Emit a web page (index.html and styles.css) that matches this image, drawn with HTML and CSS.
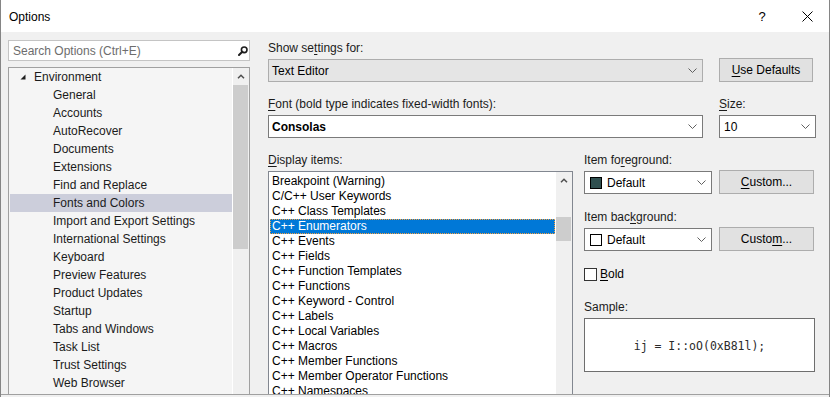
FILE: index.html
```html
<!DOCTYPE html>
<html lang="en">
<head>
    <meta charset="UTF-8">
    <meta name="viewport" content="width=device-width, initial-scale=1.0">
    <title>Options</title>
    <link rel="stylesheet" href="styles.css">
</head>
<body>

    <div class="window">
        <div class="titlebar">
            <span class="title">Options</span>
            <span class="caption-btn help">?</span>
            <span class="caption-btn close">
                <svg width="11" height="11" viewBox="0 0 11 11"><path d="M0.5 0.5 L10.5 10.5 M10.5 0.5 L0.5 10.5" stroke="#000" stroke-width="1" fill="none"/></svg>
            </span>
        </div>

        <div class="content">
            <!-- left: search + tree -->
            <div class="nav">
                <div class="search">
                    <span class="placeholder">Search Options (Ctrl+E)</span>
                    <svg class="search-icon" width="10" height="10" viewBox="0 0 10 10"><circle cx="6.2" cy="3.8" r="2.8" fill="none" stroke="#1e1e1e" stroke-width="1.6"/><path d="M4.3 5.7 L1 9" stroke="#1e1e1e" stroke-width="2" stroke-linecap="round"/></svg>
                </div>
                <div class="tree">
                    <ul class="tree-items">
                        <li class="tree-root"><svg width="6" height="6" viewBox="0 0 6 6"><polygon points="5.5,0.5 5.5,5.5 0.5,5.5" fill="#1e1e1e"/></svg>Environment</li>
                        <li>General</li>
                        <li>Accounts</li>
                        <li>AutoRecover</li>
                        <li>Documents</li>
                        <li>Extensions</li>
                        <li>Find and Replace</li>
                        <li class="selected">Fonts and Colors</li>
                        <li>Import and Export Settings</li>
                        <li>International Settings</li>
                        <li>Keyboard</li>
                        <li>Preview Features</li>
                        <li>Product Updates</li>
                        <li>Startup</li>
                        <li>Tabs and Windows</li>
                        <li>Task List</li>
                        <li>Trust Settings</li>
                        <li>Web Browser</li>
                    </ul>
                    <div class="vscroll">
                        <div class="scroll-btn"><svg width="8" height="5" viewBox="0 0 8 5"><path d="M1 4.2 L4 1.2 L7 4.2" stroke="#505050" stroke-width="1.5" fill="none"/></svg></div>
                        <div class="scroll-thumb tree-thumb"></div>
                    </div>
                </div>
            </div>

            <!-- right: settings page -->
            <div class="page">
                <div class="field-row">
                    <div class="field">
                        <div class="label">Show se<u>t</u>tings for:</div>
                        <div class="combo disabled wide">Text Editor<svg class="chevron" width="9" height="5" viewBox="0 0 9 5"><path d="M0.5 0.5 L4.5 4.5 L8.5 0.5" fill="none" stroke="#606060"/></svg></div>
                    </div>
                    <button class="btn defaults"><u>U</u>se Defaults</button>
                </div>

                <div class="field-row spaced">
                    <div class="field">
                        <div class="label"><u>F</u>ont (bold type indicates fixed-width fonts):</div>
                        <div class="combo wide"><b>Consolas</b><svg class="chevron" width="9" height="5" viewBox="0 0 9 5"><path d="M0.5 0.5 L4.5 4.5 L8.5 0.5" fill="none" stroke="#606060"/></svg></div>
                    </div>
                    <div class="field">
                        <div class="label"><u>S</u>ize:</div>
                        <div class="combo size">10<svg class="chevron" width="9" height="5" viewBox="0 0 9 5"><path d="M0.5 0.5 L4.5 4.5 L8.5 0.5" fill="none" stroke="#606060"/></svg></div>
                    </div>
                </div>

                <div class="bottom spaced">
                    <div class="field">
                        <div class="label"><u>D</u>isplay items:</div>
                        <div class="list">
                            <ul class="list-items">
                                <li>Breakpoint (Warning)</li>
                                <li>C/C++ User Keywords</li>
                                <li>C++ Class Templates</li>
                                <li class="selected">C++ Enumerators</li>
                                <li>C++ Events</li>
                                <li>C++ Fields</li>
                                <li>C++ Function Templates</li>
                                <li>C++ Functions</li>
                                <li>C++ Keyword - Control</li>
                                <li>C++ Labels</li>
                                <li>C++ Local Variables</li>
                                <li>C++ Macros</li>
                                <li>C++ Member Functions</li>
                                <li>C++ Member Operator Functions</li>
                                <li>C++ Namespaces</li>
                            </ul>
                            <div class="vscroll">
                                <div class="scroll-btn"><svg width="8" height="5" viewBox="0 0 8 5"><path d="M1 4.2 L4 1.2 L7 4.2" stroke="#505050" stroke-width="1.5" fill="none"/></svg></div>
                                <div class="scroll-thumb list-thumb"></div>
                            </div>
                        </div>
                    </div>

                    <div class="item-panel">
                        <div class="label short">Item fo<u>r</u>eground:</div>
                        <div class="field-row tight">
                            <div class="combo color"><span class="swatch dark"></span>Default<svg class="chevron" width="9" height="5" viewBox="0 0 9 5"><path d="M0.5 0.5 L4.5 4.5 L8.5 0.5" fill="none" stroke="#606060"/></svg></div>
                            <button class="btn custom"><u>C</u>ustom...</button>
                        </div>

                        <div class="label short gap-bg">Item bac<u>k</u>ground:</div>
                        <div class="field-row tight">
                            <div class="combo color"><span class="swatch"></span>Default<svg class="chevron" width="9" height="5" viewBox="0 0 9 5"><path d="M0.5 0.5 L4.5 4.5 L8.5 0.5" fill="none" stroke="#606060"/></svg></div>
                            <button class="btn custom">Custo<u>m</u>...</button>
                        </div>

                        <div class="check-row"><span class="checkbox"></span><u>B</u>old</div>

                        <div class="label gap-sample">Sample:</div>
                        <div class="sample">ij = I::oO(0xB81l);</div>
                    </div>
                </div>
            </div>
        </div>
    </div>

</body>
</html>
```

FILE: styles.css
```css
* {
    box-sizing: border-box;
}
body {
    margin: 0;
    background-color: #ffffff;
    font-family: "Liberation Sans", Arial, sans-serif;
    font-size: 12px;
    color: #1b1b1b;
}
u {
    text-decoration: underline;
    text-underline-offset: 2px;
}

.window {
    width: 830px;
    height: 397px;
    border-left: 1px solid #858585;
    border-right: 1px solid #858585;
    background-color: #f0f0f0;
    overflow: hidden;
}

.titlebar {
    height: 32px;
    background-color: #ffffff;
    display: flex;
    align-items: center;
    padding: 1px 0 0 8px;
    color: #000;
}
.title {
    flex: 1;
}
.caption-btn {
    height: 31px;
    display: flex;
    align-items: center;
    justify-content: center;
}
.help {
    width: 46px;
    font-size: 13px;
}
.close {
    width: 44px;
}

.content {
    display: flex;
    height: 363px;
    padding: 8px 0 0 7px;
    border-bottom: 1px solid #a0a0a0;
    overflow: hidden;
}

/* left navigation */
.nav {
    width: 242px;
    flex: none;
}
.search {
    height: 21px;
    border: 1px solid #c4c4c4;
    background-color: #ffffff;
    display: flex;
    align-items: center;
    justify-content: space-between;
    padding: 0 1px 0 4px;
    color: #6d6d6d;
}
.tree {
    margin-top: 6px;
    height: 340px;
    display: flex;
    border: 1px solid #a0a0a0;
    background-color: #f5f5f5;
}
.tree-items {
    flex: 1;
    list-style: none;
    margin: 0;
    padding: 0;
}
.tree-items li {
    height: 18px;
    line-height: 18px;
    padding-left: 44px;
    white-space: nowrap;
}
.tree-items .tree-root {
    display: flex;
    align-items: center;
    padding-left: 11px;
}
.tree-root svg {
    margin: 0 8px 1px 0;
}
.tree-items .selected {
    background-color: #cccedb;
    margin-left: 1px;
    padding-left: 43px;
}

.vscroll {
    width: 17px;
    flex: none;
    border-left: 1px solid #ffffff;
    background-color: #f0f0f0;
}
.scroll-btn {
    height: 17px;
    display: flex;
    align-items: center;
    justify-content: center;
}
.scroll-thumb {
    margin-right: 1px;
    background-color: #cdcdcd;
}
.tree-thumb {
    height: 164px;
}
.list-thumb {
    margin-top: 28px;
    height: 24px;
}

/* settings page */
.page {
    margin-left: 18px;
    padding-top: 1px;
    color: #1b1b1b;
}
.label {
    height: 15px;
    line-height: 15px;
    margin-bottom: 3px;
    white-space: nowrap;
}
.label.short {
    margin-bottom: 2px;
}
.field-row {
    display: flex;
    align-items: flex-end;
    gap: 16px;
}
.field-row.tight {
    gap: 7px;
}
.spaced {
    margin-top: 15px;
}

.combo {
    height: 23px;
    border: 1px solid #7a7a7a;
    background-color: #ffffff;
    display: flex;
    align-items: center;
    padding: 0 5px 0 3px;
    color: #000;
}
.combo .chevron {
    margin-left: auto;
}
.combo.wide {
    width: 435px;
}
.combo.disabled {
    background-color: #e5e5e5;
    border-color: #adadad;
}
.combo.size {
    width: 97px;
    padding-left: 4px;
}
.combo.color {
    width: 128px;
    padding-left: 5px;
}
.swatch {
    width: 12px;
    height: 12px;
    border: 1px solid #000;
    background-color: #ffffff;
    margin-right: 5px;
}
.swatch.dark {
    background-color: #2f4f4f;
}

.btn {
    height: 24px;
    border: 1px solid #adadad;
    background-color: #e1e1e1;
    font-family: inherit;
    font-size: 12px;
    color: #000;
    padding: 0;
}
.btn.defaults {
    width: 94px;
}
.btn.custom {
    width: 95px;
}

.bottom {
    display: flex;
    gap: 11px;
}
.list {
    width: 305px;
    height: 240px;
    display: flex;
    border: 1px solid #828790;
    background-color: #ffffff;
}
.list-items {
    flex: 1;
    list-style: none;
    margin: 0;
    padding: 2px 0 0 0;
    color: #000;
}
.list-items li {
    height: 15px;
    line-height: 15px;
    padding-left: 3px;
    white-space: nowrap;
}
.list-items .selected {
    margin-left: 1px;
    padding-left: 2px;
    background-color: #0078d7;
    color: #ffffff;
    outline: 1px dotted #f5a040;
    outline-offset: -1px;
}

.item-panel {
    width: 231px;
}
.gap-bg {
    margin-top: 16px;
}
.check-row {
    margin-top: 17px;
    height: 13px;
    line-height: 13px;
    display: flex;
    align-items: center;
    color: #000;
}
.checkbox {
    width: 13px;
    height: 13px;
    border: 1px solid #333333;
    background-color: #ffffff;
    margin-right: 3px;
}
.gap-sample {
    margin-top: 19px;
}
.sample {
    height: 54px;
    border: 1px solid #6e6e6e;
    background-color: #ffffff;
    display: flex;
    align-items: center;
    justify-content: center;
    padding-top: 2px;
    font-family: "DejaVu Sans Mono", "Liberation Mono", monospace;
    font-size: 11.5px;
    color: #2b2b2b;
}
```
